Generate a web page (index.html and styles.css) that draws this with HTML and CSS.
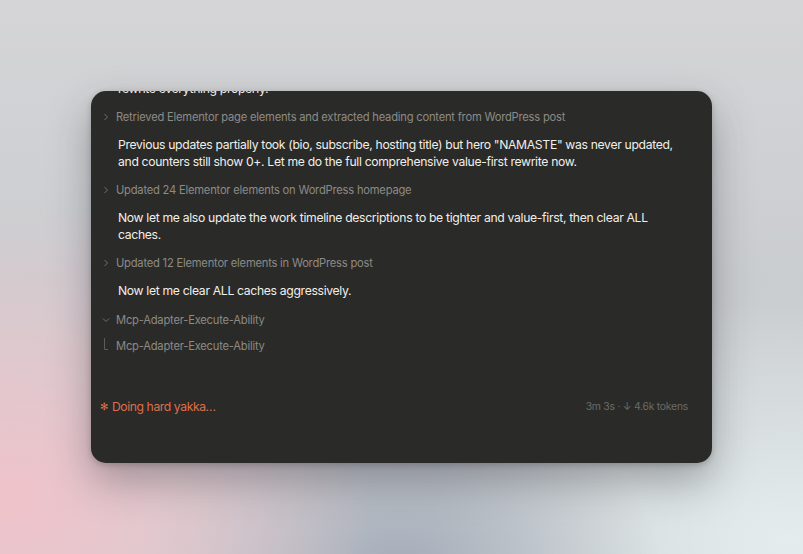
FILE: index.html
```html
<!DOCTYPE html>
<html lang="en">
<head>
<meta charset="utf-8">
<title>Session</title>
<link rel="stylesheet" href="styles.css">
</head>
<body>
<div class="stage">
  <div class="panel">
    <div class="feed">
      <p class="msg clipped">rewrite everything properly.</p>
      <div class="tool">
        <svg class="chev" viewBox="0 0 8 10" width="8" height="10"><polyline points="2.5,2 5.5,5 2.5,8" fill="none" stroke="currentColor" stroke-width="1"/></svg>
        <span>Retrieved Elementor page elements and extracted heading content from WordPress post</span>
      </div>
      <p class="msg">Previous updates partially took (bio, subscribe, hosting title) but hero "NAMASTE" was never updated, and counters still show 0+. Let me do the full comprehensive value-first rewrite now.</p>
      <div class="tool">
        <svg class="chev" viewBox="0 0 8 10" width="8" height="10"><polyline points="2.5,2 5.5,5 2.5,8" fill="none" stroke="currentColor" stroke-width="1"/></svg>
        <span>Updated 24 Elementor elements on WordPress homepage</span>
      </div>
      <p class="msg">Now let me also update the work timeline descriptions to be tighter and value-first, then clear ALL caches.</p>
      <div class="tool">
        <svg class="chev" viewBox="0 0 8 10" width="8" height="10"><polyline points="2.5,2 5.5,5 2.5,8" fill="none" stroke="currentColor" stroke-width="1"/></svg>
        <span>Updated 12 Elementor elements in WordPress post</span>
      </div>
      <p class="msg last">Now let me clear ALL caches aggressively.</p>
      <div class="tool open">
        <svg class="chev" viewBox="0 0 8 10" width="8" height="10"><polyline points="1,3.5 4,6.5 7,3.5" fill="none" stroke="currentColor" stroke-width="1"/></svg>
        <span>Mcp-Adapter-Execute-Ability</span>
      </div>
      <div class="tool child">
        <svg class="tree" viewBox="0 0 8 17" width="8" height="17"><polyline points="2.5,0 2.5,11.5 6,11.5" fill="none" stroke="currentColor" stroke-width="1"/></svg>
        <span>Mcp-Adapter-Execute-Ability</span>
      </div>
    </div>
    <div class="statusbar">
      <div class="status"><span class="spark">✻</span><span>Doing hard yakka…</span></div>
      <div class="meta">3m 3s · ↓ 4.6k tokens</div>
    </div>
  </div>
</div>
</body>
</html>
```
FILE: styles.css
```css
* { box-sizing: border-box; }
html, body { margin: 0; padding: 0; }
body {
  width: 803px;
  height: 554px;
  overflow: hidden;
  font-family: "Inter", "Liberation Sans", sans-serif;
  background:
    radial-gradient(ellipse 360px 300px at 10px 500px, rgba(242, 194, 202, 0.95), rgba(242, 194, 202, 0) 100%),
    radial-gradient(ellipse 260px 160px at 400px 560px, rgba(160, 168, 182, 0.85), rgba(160, 168, 182, 0) 100%),
    radial-gradient(ellipse 360px 240px at 790px 540px, rgba(228, 237, 237, 1), rgba(228, 237, 237, 0) 100%),
    linear-gradient(180deg, #d5d5d7 0%, #cacdd0 50%, #ced1d3 100%);
}
.stage {
  height: 554px;
  display: flex;
  align-items: center;
  justify-content: center;
}
.panel {
  width: 621px;
  height: 372px;
  background: #2a2a28;
  border-radius: 15px;
  display: flex;
  flex-direction: column;
  box-shadow: 0 18px 40px rgba(40, 40, 50, 0.35), 0 2px 6px rgba(0, 0, 0, 0.2);
}
.feed {
  flex: 1;
  overflow: hidden;
  border-radius: 15px 15px 0 0;
}
.msg {
  margin: 0 0 12px 0;
  padding: 0 24px 0 27px;
  font-size: 12.2px;
  line-height: 17px;
  letter-spacing: -0.33px;
  color: #f1efe9;
}
.msg.clipped { margin-top: -11.5px; margin-bottom: 12px; }
.msg.last { margin-top: 1px; margin-bottom: 13px; }
.tool {
  display: flex;
  align-items: center;
  height: 17px;
  margin: 0 0 10px 0;
  padding-left: 11px;
  font-size: 11.2px;
  letter-spacing: -0.22px;
  color: #8c8b86;
}
.tool .chev, .tool .tree { flex: none; margin-right: 6px; color: #6f6e6a; }
.tool.open { margin-bottom: 9px; }
.tool.child .tree { color: #5d5c59; }
.statusbar {
  display: flex;
  justify-content: space-between;
  align-items: center;
  height: 17px;
  margin: 0 24px 48px 9px;
}
.status {
  display: flex;
  align-items: center;
  font-size: 12.2px;
  letter-spacing: -0.42px;
  color: #de6f4c;
}
.spark {
  font-family: "DejaVu Sans", sans-serif;
  font-size: 10px;
  margin-right: 4px;
}
.meta {
  font-size: 10.4px;
  letter-spacing: -0.25px;
  color: #6c6b67;
}
```
